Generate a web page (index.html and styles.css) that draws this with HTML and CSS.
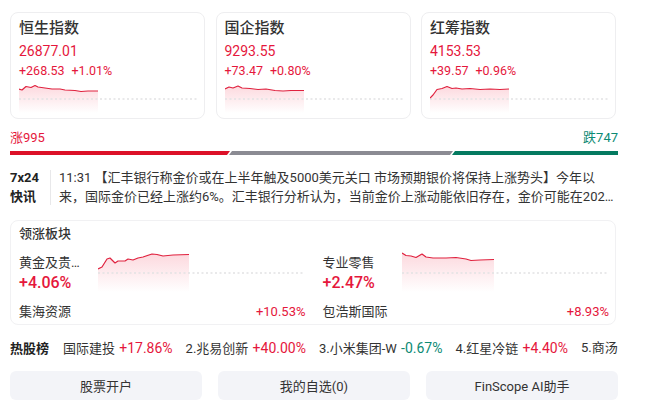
FILE: index.html
```html
<!DOCTYPE html>
<html lang="zh">
<head>
<meta charset="utf-8">
<link rel="stylesheet" href="styles.css">
</head>
<body>
<div class="page">
  <svg width="0" height="0" class="defs">
    <defs>
      <linearGradient id="fillRed" x1="0" y1="0" x2="0" y2="1">
        <stop offset="0" stop-color="#f4526a" stop-opacity="0.22"/>
        <stop offset="1" stop-color="#f4526a" stop-opacity="0"/>
      </linearGradient>
    </defs>
  </svg>

  <div class="indices">
    <div class="card">
      <div class="card-title">恒生指数</div>
      <div class="price up">26877.01</div>
      <div class="change up"><span>+268.53</span><span>+1.01%</span></div>
      <svg class="spark" width="178" height="30" viewBox="0 0 178 30">
        <path d="M0,6 L3,7 L7,3.5 L12,4.5 L16,2.5 L19,4 L26,5 L33,6 L41,6 L46,7 L56,7.5 L62,8.5 L69,8 L79,8 L79,30 L0,30 Z" fill="url(#fillRed)"/>
        <line x1="0" y1="16" x2="178" y2="16" class="dots"/>
        <polyline points="0,6 3,7 7,3.5 12,4.5 16,2.5 19,4 26,5 33,6 41,6 46,7 56,7.5 62,8.5 69,8 79,8" class="line"/>
      </svg>
    </div>
    <div class="card">
      <div class="card-title">国企指数</div>
      <div class="price up">9293.55</div>
      <div class="change up"><span>+73.47</span><span>+0.80%</span></div>
      <svg class="spark" width="178" height="30" viewBox="0 0 178 30">
        <path d="M0,6 L4,4 L8,5 L13,3 L17,5 L25,5.5 L33,6.5 L41,6 L50,7.5 L58,8 L66,7.5 L79,7.5 L79,30 L0,30 Z" fill="url(#fillRed)"/>
        <line x1="0" y1="16" x2="178" y2="16" class="dots"/>
        <polyline points="0,6 4,4 8,5 13,3 17,5 25,5.5 33,6.5 41,6 50,7.5 58,8 66,7.5 79,7.5" class="line"/>
      </svg>
    </div>
    <div class="card">
      <div class="card-title">红筹指数</div>
      <div class="price up">4153.53</div>
      <div class="change up"><span>+39.57</span><span>+0.96%</span></div>
      <svg class="spark" width="178" height="30" viewBox="0 0 178 30">
        <path d="M0,15 L3,12 L7,6.5 L12,5.5 L17,3.5 L22,5.5 L26,5 L32,6 L40,5.5 L50,6.5 L60,6 L70,6.5 L79,6 L79,30 L0,30 Z" fill="url(#fillRed)"/>
        <line x1="0" y1="16" x2="178" y2="16" class="dots"/>
        <polyline points="0,15 3,12 7,6.5 12,5.5 17,3.5 22,5.5 26,5 32,6 40,5.5 50,6.5 60,6 70,6.5 79,6" class="line"/>
      </svg>
    </div>
  </div>

  <div class="breadth">
    <div class="breadth-labels">
      <span class="up">涨995</span>
      <span class="down">跌747</span>
    </div>
    <div class="breadth-bar">
      <div class="seg seg-up"></div>
      <div class="seg seg-flat"></div>
      <div class="seg seg-down"></div>
    </div>
  </div>

  <div class="news">
    <div class="news-label">7x24<br>快讯</div>
    <div class="news-sep"></div>
    <p class="news-text">11:31 【汇丰银行称金价或在上半年触及5000美元关口 市场预期银价将保持上涨势头】今年以来，国际金价已经上涨约6%。汇丰银行分析认为，当前金价上涨动能依旧存在，金价可能在2026年上半年触及5000美元关口。</p>
  </div>

  <div class="sectors">
    <div class="sectors-title">领涨板块</div>
    <div class="sector-cols">
      <div class="sector">
        <div class="sector-main">
          <div class="sector-info">
            <div class="sector-name">黄金及贵…</div>
            <div class="sector-pct up">+4.06%</div>
          </div>
          <svg class="sector-chart" width="207" height="44" viewBox="0 0 207 44">
            <path d="M0,21 L4,19 L9,11 L12,10 L17,15 L20,13 L27,13 L30,11 L35,12 L40,10 L45,9 L54,6 L59,6.5 L65,8 L75,7 L91,6.5 L91,44 L0,44 Z" fill="url(#fillRed)"/>
            <line x1="0" y1="25" x2="207" y2="25" class="dots"/>
            <polyline points="0,21 4,19 9,11 12,10 17,15 20,13 27,13 30,11 35,12 40,10 45,9 54,6 59,6.5 65,8 75,7 91,6.5" class="line"/>
          </svg>
        </div>
        <div class="sector-lead">
          <span>集海资源</span>
          <span class="up">+10.53%</span>
        </div>
      </div>
      <div class="sector">
        <div class="sector-main">
          <div class="sector-info">
            <div class="sector-name">专业零售</div>
            <div class="sector-pct up">+2.47%</div>
          </div>
          <svg class="sector-chart" width="207" height="44" viewBox="0 0 207 44">
            <path d="M0,5 L4,7.5 L9,8 L14,9.5 L20,6 L24,9 L31,10 L44,10 L54,9.5 L64,11 L69,12.5 L78,12 L92,11.5 L92,44 L0,44 Z" fill="url(#fillRed)"/>
            <line x1="0" y1="25" x2="207" y2="25" class="dots"/>
            <polyline points="0,5 4,7.5 9,8 14,9.5 20,6 24,9 31,10 44,10 54,9.5 64,11 69,12.5 78,12 92,11.5" class="line"/>
          </svg>
        </div>
        <div class="sector-lead">
          <span>包浩斯国际</span>
          <span class="up">+8.93%</span>
        </div>
      </div>
    </div>
  </div>

  <div class="hot">
    <div class="hot-label">热股榜</div>
    <div class="hot-list">
      <span class="hot-item">国际建投 <b class="up">+17.86%</b></span>
      <span class="hot-item">2.兆易创新 <b class="up">+40.00%</b></span>
      <span class="hot-item">3.小米集团-W <b class="down">-0.67%</b></span>
      <span class="hot-item">4.红星冷链 <b class="up">+4.40%</b></span>
      <span class="hot-item">5.商汤</span>
    </div>
  </div>

  <div class="actions">
    <div class="btn">股票开户</div>
    <div class="btn">我的自选(0)</div>
    <div class="btn">FinScope AI助手</div>
  </div>
</div>
</body>
</html>
```

FILE: styles.css
```css
* { box-sizing: border-box; }
html, body { margin: 0; padding: 0; background: #fff; }
body {
  font-family: Roboto, "Noto Sans CJK SC", sans-serif;
  color: #333;
  font-size: 13px;
}
.defs { position: absolute; }
.page {
  width: 608px;
  margin-left: 10px;
  padding-top: 12px;
}
.up { color: #e5173c; }
.down { color: #0c8a74; }

.indices {
  width: 606px;
  display: grid;
  grid-template-columns: repeat(3, 1fr);
  gap: 10.5px;
}
.card {
  height: 107px;
  border: 1px solid #eeeef0;
  border-radius: 8px;
  padding: 5px 7px 0 8px;
}
.card-title {
  font-size: 15px;
  line-height: 20px;
  font-weight: 500;
  color: #333;
}
.price {
  font-size: 14px;
  line-height: 20px;
  margin-top: 3px;
}
.change {
  font-size: 12.5px;
  line-height: 20px;
  display: flex;
  gap: 7px;
}
.spark { display: block; margin-top: 2px; }
.line { fill: none; stroke: #e0223f; stroke-width: 1.2; stroke-linejoin: round; }
.dots { stroke: #e2e2e4; stroke-width: 1.6; stroke-dasharray: 2 2.5; }

.breadth { margin-top: 9px; }
.breadth-labels {
  display: flex;
  justify-content: space-between;
  font-size: 13px;
  line-height: 20px;
}
.breadth-bar {
  display: flex;
  height: 4px;
  margin-top: 3px;
}
.seg { height: 100%; }
.seg-up {
  flex: 0 0 220px;
  background: #dc1128;
  clip-path: polygon(0 0, 100% 0, calc(100% - 3px) 100%, 0 100%);
}
.seg-flat {
  flex: 0 0 224px;
  margin-left: -1px;
  background: #8b8b93;
  clip-path: polygon(3px 0, 100% 0, calc(100% - 3px) 100%, 0 100%);
}
.seg-down {
  flex: 1;
  margin-left: -1px;
  background: #047a60;
  clip-path: polygon(3px 0, 100% 0, 100% 100%, 0 100%);
}

.news {
  display: grid;
  grid-template-columns: 32px 1px 1fr;
  column-gap: 8px;
  margin-top: 13px;
  align-items: start;
}
.news-label {
  font-weight: 700;
  font-size: 13px;
  line-height: 19px;
  color: #222;
  white-space: nowrap;
}
.news-sep {
  height: 35px;
  margin-top: 2px;
  background: #e8e8ea;
}
.news-text {
  margin: 0;
  padding-right: 2px;
  font-size: 13px;
  line-height: 19px;
  color: #333;
  display: -webkit-box;
  -webkit-line-clamp: 2;
  -webkit-box-orient: vertical;
  overflow: hidden;
}

.sectors {
  width: 606px;
  margin-top: 14px;
  border: 1px solid #f1f1f3;
  border-radius: 8px;
  padding: 3px 6px 2px 8px;
}
.sectors-title {
  font-size: 13px;
  line-height: 20px;
  font-weight: 500;
}
.sector-cols {
  display: flex;
  gap: 17px;
  margin-top: 4px;
}
.sector { flex: 1; min-width: 0; }
.sector-main {
  display: flex;
  align-items: flex-start;
}
.sector-info {
  width: 79px;
  padding-top: 5px;
}
.sector-name {
  font-size: 13px;
  line-height: 20px;
  white-space: nowrap;
}
.sector-pct {
  font-size: 16px;
  line-height: 20px;
  font-weight: 500;
}
.sector-chart { display: block; }
.sector-lead {
  display: flex;
  justify-content: space-between;
  font-size: 13px;
  line-height: 20px;
  margin-top: 9px;
}

.hot {
  display: flex;
  align-items: center;
  margin-top: 13px;
  line-height: 20px;
}
.hot-label {
  font-weight: 700;
  font-size: 13px;
  color: #222;
  width: 53px;
  flex: none;
}
.hot-list {
  flex: 1;
  min-width: 0;
  overflow: hidden;
  white-space: nowrap;
  display: flex;
  gap: 13px;
}
.hot-item { flex: none; color: #333; }
.hot-item b { font-weight: 400; font-size: 14px; margin-left: 1px; }

.actions {
  display: grid;
  grid-template-columns: repeat(3, 1fr);
  gap: 16px;
  margin-top: 12px;
}
.btn {
  height: 29px;
  border-radius: 6px;
  background: #f3f4f8;
  display: flex;
  align-items: center;
  justify-content: center;
  font-size: 13px;
  color: #333;
}
```
